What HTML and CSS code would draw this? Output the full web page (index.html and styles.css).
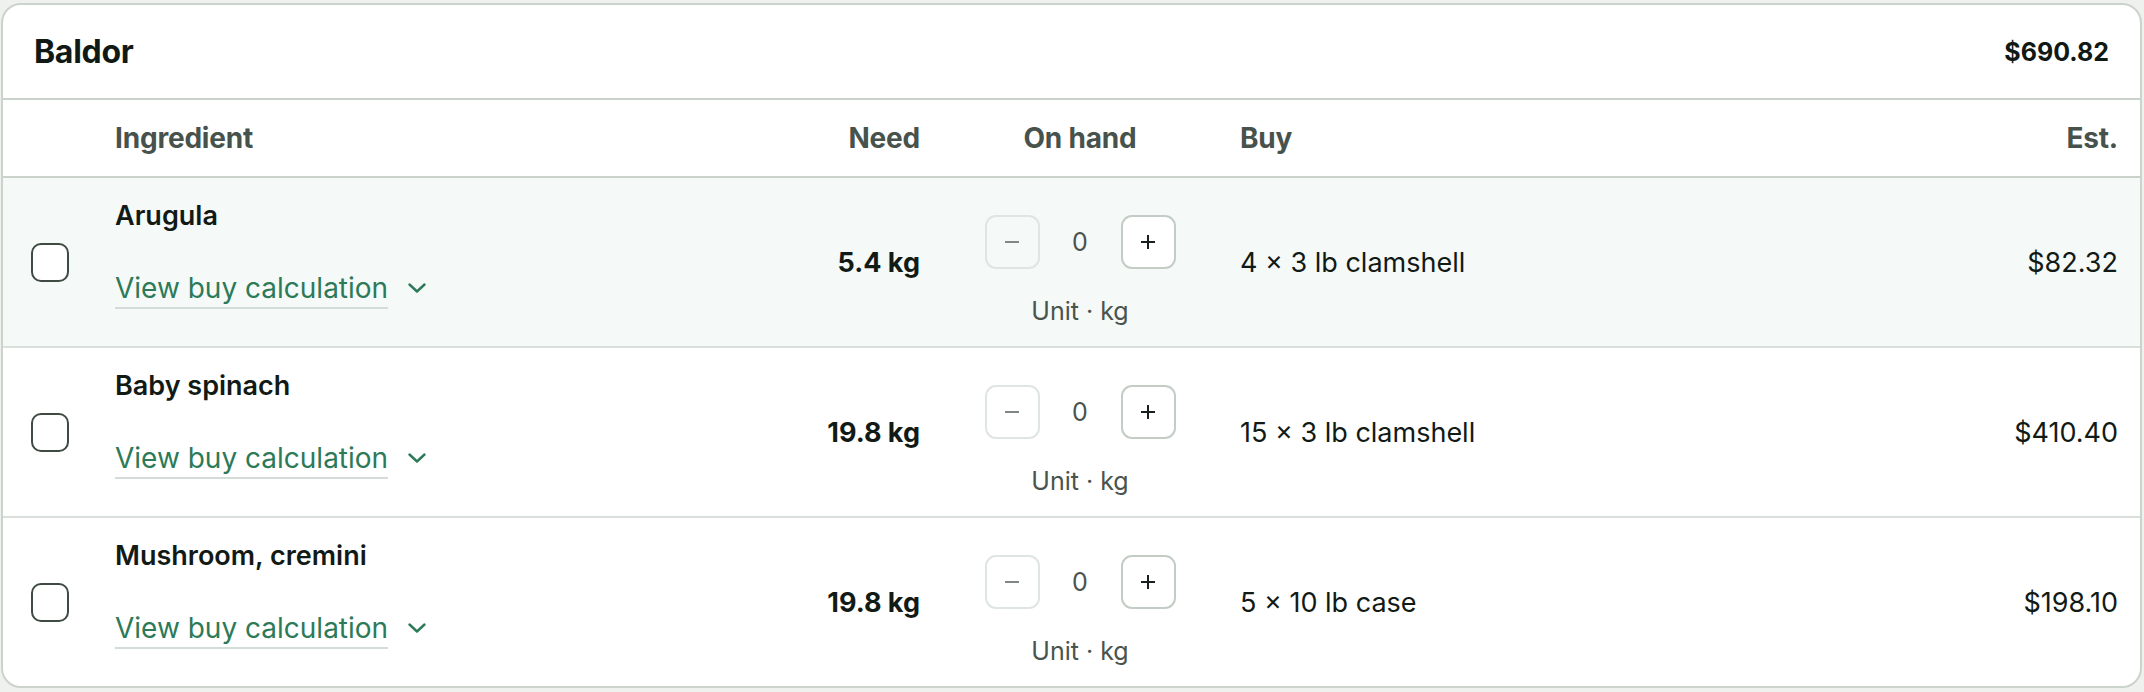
FILE: index.html
```html
<!DOCTYPE html>
<html lang="en">
<head>
<meta charset="utf-8">
<title>Baldor order</title>
<link rel="stylesheet" href="styles.css">
</head>
<body>
<div class="page">
  <section class="card">
    <header class="card-head">
      <h2 class="vendor">Baldor</h2>
      <span class="total">$690.82</span>
    </header>
    <div class="grid colhead">
      <span></span>
      <span class="ch">Ingredient</span>
      <span class="ch right">Need</span>
      <span class="ch center">On hand</span>
      <span class="ch">Buy</span>
      <span class="ch right">Est.</span>
    </div>

    <div class="grid row active">
      <span class="cb"></span>
      <div class="ing">
        <div class="name">Arugula</div>
        <a class="calc"><span class="calc-text">View buy calculation</span><svg class="chev" viewBox="0 0 18 10" width="18" height="10"><polyline points="1.5,1.5 9,8.5 16.5,1.5" fill="none" stroke="currentColor" stroke-width="2.4" stroke-linecap="round" stroke-linejoin="round"/></svg></a>
      </div>
      <div class="need">5.4 kg</div>
      <div class="onhand">
        <div class="stepper">
          <span class="step minus"><svg viewBox="0 0 16 16" width="16" height="16"><line x1="1" y1="8" x2="15" y2="8" stroke="currentColor" stroke-width="2"/></svg></span>
          <span class="qty">0</span>
          <span class="step plus"><svg viewBox="0 0 16 16" width="16" height="16"><line x1="1" y1="8" x2="15" y2="8" stroke="currentColor" stroke-width="2"/><line x1="8" y1="1" x2="8" y2="15" stroke="currentColor" stroke-width="2"/></svg></span>
        </div>
        <div class="unit">Unit · kg</div>
      </div>
      <div class="buy">4 × 3 lb clamshell</div>
      <div class="est">$82.32</div>
    </div>

    <div class="grid row">
      <span class="cb"></span>
      <div class="ing">
        <div class="name">Baby spinach</div>
        <a class="calc"><span class="calc-text">View buy calculation</span><svg class="chev" viewBox="0 0 18 10" width="18" height="10"><polyline points="1.5,1.5 9,8.5 16.5,1.5" fill="none" stroke="currentColor" stroke-width="2.4" stroke-linecap="round" stroke-linejoin="round"/></svg></a>
      </div>
      <div class="need">19.8 kg</div>
      <div class="onhand">
        <div class="stepper">
          <span class="step minus"><svg viewBox="0 0 16 16" width="16" height="16"><line x1="1" y1="8" x2="15" y2="8" stroke="currentColor" stroke-width="2"/></svg></span>
          <span class="qty">0</span>
          <span class="step plus"><svg viewBox="0 0 16 16" width="16" height="16"><line x1="1" y1="8" x2="15" y2="8" stroke="currentColor" stroke-width="2"/><line x1="8" y1="1" x2="8" y2="15" stroke="currentColor" stroke-width="2"/></svg></span>
        </div>
        <div class="unit">Unit · kg</div>
      </div>
      <div class="buy">15 × 3 lb clamshell</div>
      <div class="est">$410.40</div>
    </div>

    <div class="grid row last">
      <span class="cb"></span>
      <div class="ing">
        <div class="name">Mushroom, cremini</div>
        <a class="calc"><span class="calc-text">View buy calculation</span><svg class="chev" viewBox="0 0 18 10" width="18" height="10"><polyline points="1.5,1.5 9,8.5 16.5,1.5" fill="none" stroke="currentColor" stroke-width="2.4" stroke-linecap="round" stroke-linejoin="round"/></svg></a>
      </div>
      <div class="need">19.8 kg</div>
      <div class="onhand">
        <div class="stepper">
          <span class="step minus"><svg viewBox="0 0 16 16" width="16" height="16"><line x1="1" y1="8" x2="15" y2="8" stroke="currentColor" stroke-width="2"/></svg></span>
          <span class="qty">0</span>
          <span class="step plus"><svg viewBox="0 0 16 16" width="16" height="16"><line x1="1" y1="8" x2="15" y2="8" stroke="currentColor" stroke-width="2"/><line x1="8" y1="1" x2="8" y2="15" stroke="currentColor" stroke-width="2"/></svg></span>
        </div>
        <div class="unit">Unit · kg</div>
      </div>
      <div class="buy">5 × 10 lb case</div>
      <div class="est">$198.10</div>
    </div>
  </section>
</div>
</body>
</html>
```

FILE: styles.css
```css
* { box-sizing: border-box; }
html, body { margin: 0; padding: 0; }
body {
  background: #eef1ee;
  font-family: Inter, "Noto Sans", "Liberation Sans", sans-serif;
  color: #131b17;
}
.page {
  padding: 3px 2px 4px 1px;
}
.card {
  background: #ffffff;
  border: 2px solid #cad4cd;
  border-radius: 20px;
  overflow: hidden;
}
.card-head {
  height: 95px;
  display: flex;
  align-items: center;
  justify-content: space-between;
  padding: 0 31px 0 31px;
  border-bottom: 2px solid #c9d3cb;
}
.vendor {
  margin: 0;
  font-size: 32px;
  font-weight: 700;
  letter-spacing: -0.3px;
  color: #101915;
}
.total {
  font-size: 25px;
  font-weight: 700;
  color: #101915;
}
.grid {
  display: grid;
  grid-template-columns: 84px 585px 220px 320px 1fr 300px;
  padding: 0 22px 0 28px;
  align-items: center;
}
.colhead {
  height: 78px;
  border-bottom: 2px solid #c9d3cb;
}
.ch {
  font-size: 28px;
  font-weight: 700;
  color: #48524c;
  letter-spacing: -0.2px;
}
.right { text-align: right; }
.center { text-align: center; }
.row {
  height: 170px;
  border-bottom: 2px solid #d9e0dc;
}
.row.last { border-bottom: 0; height: 168px; }
.row.active { background: #f5f9f8; }
.cb {
  width: 38px;
  height: 39px;
  border: 2px solid #3f4a43;
  border-radius: 10px;
  background: #ffffff;
  margin-left: 0;
}
.ing {
  align-self: start;
  padding-top: 20px;
  display: flex;
  flex-direction: column;
  align-items: flex-start;
}
.name {
  font-size: 27px;
  font-weight: 600;
  line-height: 36px;
  color: #121a16;
}
.calc {
  margin-top: 36px;
  display: flex;
  align-items: center;
  gap: 20px;
  color: #2c7a58;
  font-size: 28px;
  line-height: 36px;
}
.calc-text {
  border-bottom: 2px solid #d3dcd7;
  line-height: 36px;
  padding-bottom: 1px;
}
.chev { display: block; margin-top: -4px; }
.need {
  text-align: right;
  font-size: 27px;
  font-weight: 700;
  color: #121a16;
}
.onhand {
  align-self: start;
  padding-top: 37px;
  display: flex;
  flex-direction: column;
  align-items: center;
}
.stepper {
  display: flex;
  align-items: center;
  gap: 0;
}
.step {
  width: 55px;
  height: 54px;
  border-radius: 11px;
  display: flex;
  align-items: center;
  justify-content: center;
}
.step svg { display: block; }
.minus {
  border: 2px solid #dfe6e1;
  color: #7f8882;
}
.plus {
  border: 2px solid #c3cdc5;
  background: #ffffff;
  color: #17201b;
}
.qty {
  width: 81px;
  text-align: center;
  font-size: 25px;
  color: #4a534d;
}
.unit {
  margin-top: 27px;
  font-size: 25px;
  line-height: 30px;
  color: #4a534d;
}
.buy {
  font-size: 27px;
  color: #121a16;
}
.est {
  text-align: right;
  font-size: 27px;
  color: #121a16;
}
```
